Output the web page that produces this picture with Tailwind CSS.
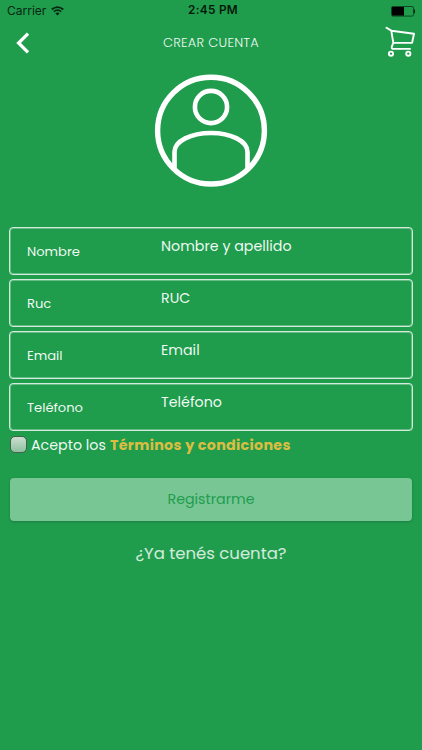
<!DOCTYPE html>
<html lang="es">
<head>
<meta charset="utf-8">
<meta name="viewport" content="width=device-width, initial-scale=1">
<title>Crear cuenta</title>
<script src="https://cdn.jsdelivr.net/npm/@tailwindcss/browser@4"></script>
</head>
<body class="bg-[#1f9d4d]">
<div class="flex h-[750px] w-[422px] flex-col overflow-hidden bg-[#1f9d4d] font-[Poppins,Inter,sans-serif] text-white/95">
  <div class="grid h-[22px] grid-cols-3 items-center px-[7px] font-[Inter,sans-serif] text-[12px] leading-none text-[#06270f]">
    <div class="flex items-center gap-[5px]"><span>Carrier</span>
      <svg class="h-[10px] w-[13px]" viewBox="0 0 13 10" fill="none" stroke="#06270f" stroke-width="1.7"><path d="M.7 3.5Q6.5-1.4 12.3 3.5M2.8 5.7q3.7-3 7.4 0"/><path d="M4.3 7.3q2.2-1.7 4.4 0L6.5 9.6Z" fill="#06270f" stroke="none"/></svg>
    </div>
    <div class="pl-[4px] text-center text-[11.8px] font-semibold tracking-[0.3px] text-[#04180a]">2:45 PM</div>
    <div class="flex justify-end"><svg class="h-[11px] w-[25px]" viewBox="0 0 25 11"><rect x="1.5" y=".5" width="22" height="9.6" rx="1.5" fill="none" stroke="#0b4a22"/><rect x="2" y="1" width="12" height="8.6" fill="#000"/><path d="M23.8 3.5h1.2v3.7h-1.2z" fill="#06270f"/></svg></div>
  </div>
  <header class="grid h-[44px] grid-cols-3 items-start pr-[7px] pl-[16px]">
    <svg class="mt-[10px] h-[22px] w-[14px]" viewBox="0 0 14 22" fill="none" stroke="#fff" stroke-width="3.3"><path d="M12 1.7 2.6 11l9.4 9.3"/></svg>
    <h1 class="mt-[11px] -ml-[9px] text-center text-[13px] leading-[20px] font-light whitespace-nowrap tracking-[0.25px]">CREAR CUENTA</h1>
    <svg class="mt-[4px] h-[31px] w-[30px] justify-self-end" viewBox="0 0 30 31" fill="none" stroke="#fff" stroke-width="1.9" stroke-linecap="round" stroke-linejoin="round"><path d="M1.5 1.8 6.3 4.6 8.3 16.9H27.1L29 7.8 6.4 4.8M8.3 16.9 6.8 20.6Q6.300 22.900 8.500 22.900H25"/><circle cx="6" cy="27.700" r="2.100"/><circle cx="23.300" cy="27.700" r="2.100"/></svg>
  </header>
  <svg class="mt-[8px] h-[114px] w-[114px] self-center" viewBox="0 0 114 114" fill="none" stroke="#fff"><circle cx="57" cy="56.6" r="53.4" stroke-width="5.4"/><circle cx="57" cy="33" r="16.1" stroke-width="4.6"/><path d="M20.5 94V78C20.5 67 37 59 57 59S93.5 67 93.5 78V94" stroke-width="4.6"/></svg>
  <form class="mt-[39px] flex flex-col px-[9px]">
    <div class="flex flex-col gap-[4px]">
      <label class="flex h-[48px] rounded-[4px] border border-white/80 pl-[17px] shadow-[inset_0_0_0_1px_#ffffff50]"><span class="w-[134px] pt-[14px] text-[13.1px] leading-[20px]">Nombre</span><span class="pt-[8px] text-[14.25px] leading-[20px]">Nombre y apellido</span></label>
      <label class="flex h-[48px] rounded-[4px] border border-white/80 pl-[17px] shadow-[inset_0_0_0_1px_#ffffff50]"><span class="w-[134px] pt-[14px] text-[13.1px] leading-[20px]">Ruc</span><span class="pt-[8px] text-[14.25px] leading-[20px]">RUC</span></label>
      <label class="flex h-[48px] rounded-[4px] border border-white/80 pl-[17px] shadow-[inset_0_0_0_1px_#ffffff50]"><span class="w-[134px] pt-[14px] text-[13.1px] leading-[20px]">Email</span><span class="pt-[8px] text-[14.25px] leading-[20px]">Email</span></label>
      <label class="flex h-[48px] rounded-[4px] border border-white/80 pl-[17px] shadow-[inset_0_0_0_1px_#ffffff50]"><span class="w-[134px] pt-[14px] text-[13.1px] leading-[20px]">Teléfono</span><span class="pt-[8px] text-[14.25px] leading-[20px]">Teléfono</span></label>
    </div>
    <div class="mt-[4px] flex h-[20px] items-center pl-[1px] text-[14.25px] leading-[20px] whitespace-nowrap">
      <span class="mb-[1px] h-[17px] w-[17px] rounded-[5px] border border-[#48604e] bg-linear-to-b from-[#cbdfd1] to-[#8fc0a0]"></span>
      <span class="ml-[4px] w-[79px]">Acepto los</span><span class="font-bold tracking-[0.32px] text-[#dcbd42]">Términos y condiciones</span>
    </div>
    <div class="mx-[1px] mt-[23px] flex h-[43px] items-center justify-center rounded-[4px] bg-[#79c695] text-[14.25px] text-[#209d4e] shadow-[0_1px_3px_#0003]">Registrarme</div>
    <div class="mt-[21px] text-center text-[16.5px] leading-[24px] text-white/80">¿Ya tenés cuenta?</div>
  </form>
</div>
</body>
</html>
